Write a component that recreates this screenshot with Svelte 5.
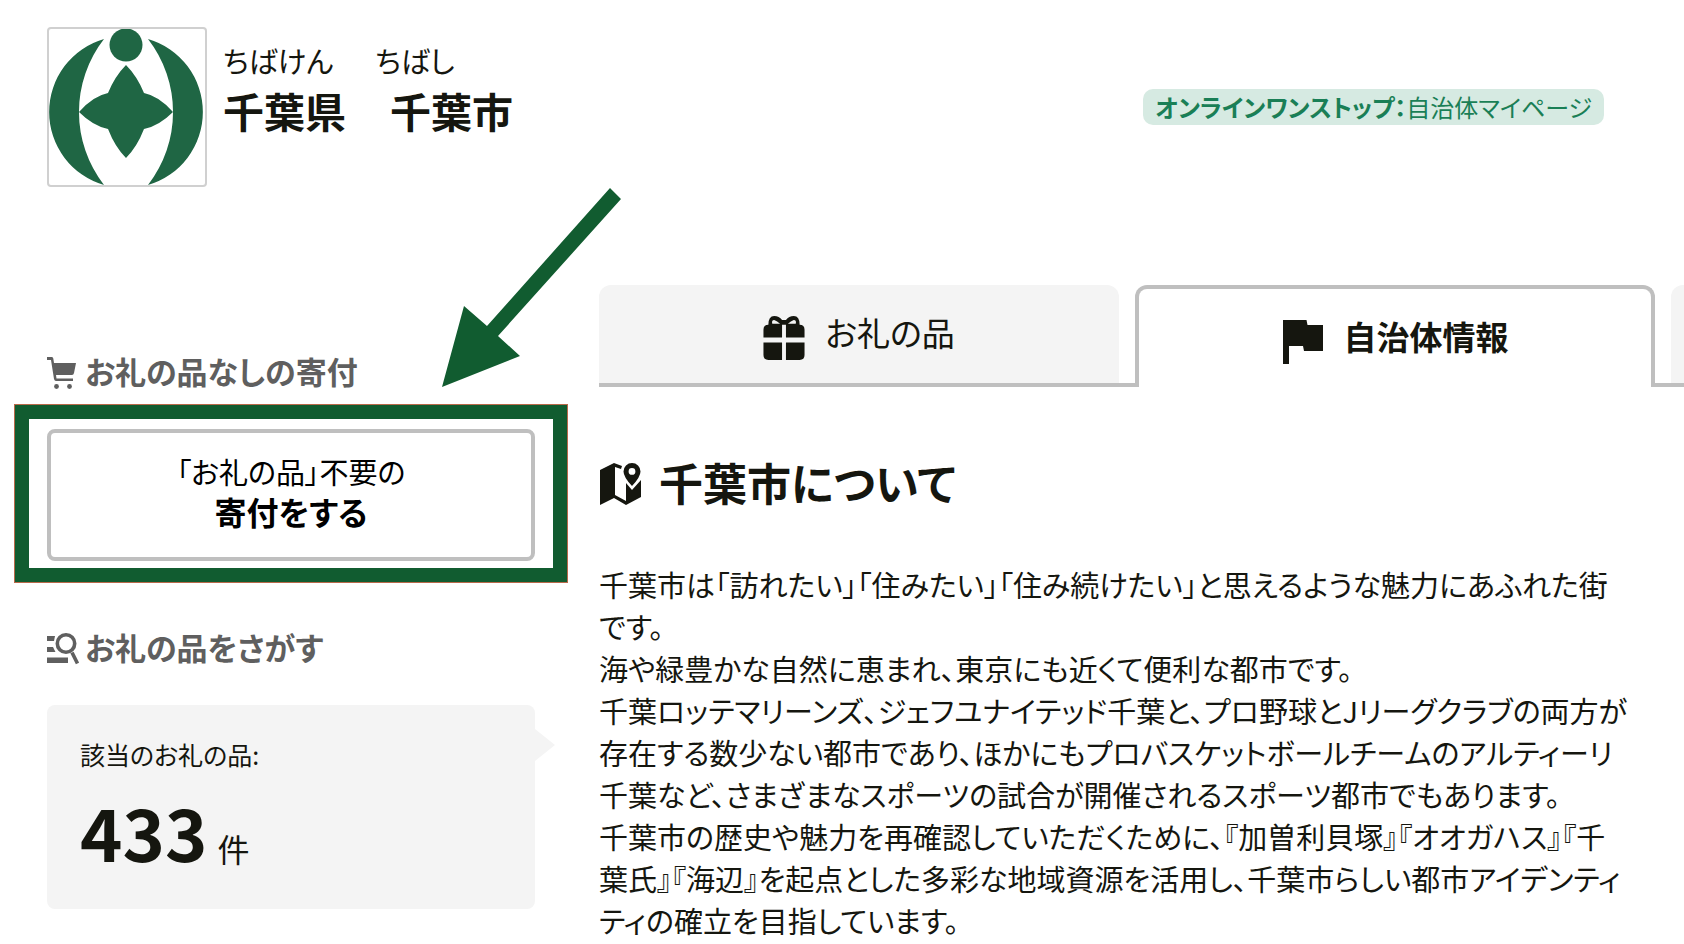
<script lang="ts">
  const kana = ["ちばけん", "ちばし"];
  const names = ["千葉県", "千葉市"];
  const count = 433;

  // each entry is one paragraph of the introduction
  const about = [
    ["千葉市は「訪れたい」「住みたい」「住み続けたい」と思えるような魅力にあふれた街", "です。"],
    ["海や緑豊かな自然に恵まれ、東京にも近くて便利な都市です。"],
    [
      "千葉ロッテマリーンズ、ジェフユナイテッド千葉と、プロ野球とJリーグクラブの両方が",
      "存在する数少ない都市であり、ほかにもプロバスケットボールチームのアルティーリ",
      "千葉など、さまざまなスポーツの試合が開催されるスポーツ都市でもあります。",
    ],
    [
      "千葉市の歴史や魅力を再確認していただくために、『加曽利貝塚』『オオガハス』『千",
      "葉氏』『海辺』を起点とした多彩な地域資源を活用し、千葉市らしい都市アイデンティ",
      "ティの確立を目指しています。",
    ],
  ];
</script>

<div class="page">
  <header>
    <svg class="emblem" viewBox="0 0 156 156" role="img" aria-label="千葉市">
      <circle cx="77" cy="16" r="16.5" />
      <path d="M55 10A76 76 0 0 0 55 156A119 119 0 0 1 55 10Z" />
      <path d="M99 10A76 76 0 0 1 99 156A119 119 0 0 0 99 10Z" />
      <path d="M77 36Q88 47 95 64Q110 67 124 83Q110 97 95 100Q88 118 77 129Q66 118 59 100Q44 97 30 83Q44 67 59 64Q66 47 77 36Z" />
    </svg>
    <div class="names">
      <p class="kana">{#each kana as k}<span>{k}</span>{/each}</p>
      <h1>{#each names as n}<span>{n}</span>{/each}</h1>
    </div>
    <a class="mypage" href="#mypage"><b>オンラインワンストップ：</b>自治体マイページ</a>
  </header>

  <div class="columns">
    <aside>
      <h2>
        <svg class="mark" viewBox="0 0 32 32" aria-hidden="true">
          <path d="M0 0H5Q6 0 6.3 1.5L7 6H29L27 16Q26.6 18 25 18H9L9.5 21.5H26V24H9Q7.5 24 7 22L4 3H0Z" />
          <circle cx="9.5" cy="29.5" r="2.4" />
          <circle cx="22.5" cy="29.5" r="2.4" />
        </svg>
        お礼の品なしの寄付
      </h2>
      <div class="focus">
        <button type="button">「お礼の品」不要の<strong>寄付をする</strong></button>
      </div>

      <h2>
        <svg class="mark" viewBox="0 0 32 32" aria-hidden="true">
          <path d="M0 3H8L7 8H0ZM0 14H6L8.5 19H0ZM0 24.5H21V30H0Z" />
          <circle class="line" cx="19" cy="10.5" r="8.7" />
          <path class="line" d="M25 19.5L30.5 30.5" />
        </svg>
        お礼の品をさがす
      </h2>
      <div class="card">
        <p>該当のお礼の品:</p>
        <p class="total"><b>{count}</b>件</p>
      </div>
    </aside>

    <main>
      <nav>
        <a class="tab" href="#gifts">
          <svg viewBox="0 0 42 45" aria-hidden="true">
            <path d="M0 14Q0 9 5 9Q5 0 11 0Q16 0 19 4H23Q26 0 31 0Q37 0 37 9Q42 9 42 14V22H23V9H19V22H0ZM0 27H19V45H5Q0 45 0 40ZM23 27H42V40Q42 45 37 45H23Z" />
            <path class="hole" d="M9 8Q8 4 11 4Q14 5 17 8ZM33 8Q34 4 31 4Q28 5 25 8Z" />
          </svg>
          お礼の品
        </a>
        <a class="tab active" href="#about" aria-current="page">
          <svg viewBox="0 0 40 44" aria-hidden="true">
            <path d="M0 0H23.5L24.5 5H40V31H21L20 26H6V44H0Z" />
          </svg>
          自治体情報
        </a>
        <a class="tab" href="#more" aria-label="その他"></a>
      </nav>

      <h2 class="title">
        <svg viewBox="0 0 42 42" aria-hidden="true">
          <path d="M1 7L15 0L23 3L22 6L16 4V32L27 38V20L33 27L42 17V34L27 42L15 35L1 42Z" />
          <path d="M33 0A8.5 8.5 0 0 1 41.5 8.5Q41.5 14 33 23Q24.5 14 24.5 8.5A8.5 8.5 0 0 1 33 0ZM33 5A3.4 3.4 0 1 0 33 11.8A3.4 3.4 0 1 0 33 5Z" fill-rule="evenodd" />
        </svg>
        千葉市について
      </h2>

      <div class="about">
        {#each about as lines}
          <p>{#each lines as line}<span>{line}</span>{/each}</p>
        {/each}
      </div>
    </main>
  </div>

  <!-- arrow pointing at the donation button -->
  <svg class="arrow" viewBox="0 0 180 200" aria-hidden="true">
    <path d="M168 0L179 11L56 148L78 168L0 199L22 118L45 138Z" />
  </svg>
</div>

<style>
  :global(body) { margin:0; background:#fff; }

  .page {
    position:relative; overflow:hidden; color:#15160f;
    font-family:"Noto Sans CJK JP", sans-serif;
    font-size:29px; line-height:42px; font-feature-settings:"palt";
  }
  p, h1, h2 { margin:0; }
  a { color:inherit; text-decoration:none; }
  svg { flex-shrink:0; fill:currentColor; }

  header { display:flex; align-items:flex-start; padding:27px 80px 0 47px; }
  .emblem { width:156px; height:156px; border:2px solid #d0d0d0; border-radius:4px; fill:#1f6644; }
  .names { flex:1; padding:12px 0 0 16px; }
  .kana { display:flex; gap:42px; }
  h1 { display:flex; gap:44px; font-size:41px; line-height:58px; }
  .mypage {
    margin-top:62px; padding:0 12px; border-radius:10px;
    background:#d6eae2; color:#1a7f56; font-size:24px; line-height:36px;
  }

  .columns { display:flex; gap:64px; padding-left:47px; margin-top:98px; }
  aside { width:488px; flex-shrink:0; padding-top:62px; }
  aside h2 { display:flex; align-items:center; gap:6px; color:#5f5f5f; font-size:31px; line-height:48px; }
  .mark { width:32px; height:32px; margin-top:4px; }
  .line { fill:none; stroke:currentColor; stroke-width:3.6; }

  .focus { margin:9px -33px 40px; padding:10px 18px 7px; border:15px solid #115c30; outline:1px solid #b9694a; outline-offset:-1px; }
  button {
    display:block; width:100%; padding:18px 0 26px; border:4px solid #bfbfbf; border-radius:8px;
    background:#fff; color:#000; font:inherit; line-height:40px; font-feature-settings:inherit; cursor:pointer;
  }
  strong { display:block; font-size:32px; }

  .card { position:relative; margin-top:34px; padding:28px 33px 22px; border-radius:8px; background:#f4f4f4; font-size:25px; }
  .card::after {
    content:""; position:absolute; left:100%; top:24px;
    border:solid transparent; border-width:16px 0 16px 20px; border-left-color:#f4f4f4;
  }
  .total { display:flex; align-items:baseline; gap:10px; font-size:32px; line-height:40px; }
  .total b { font-size:72px; line-height:112px; }

  main { flex:1; min-width:0; }
  nav { display:flex; align-items:flex-start; gap:16px; height:102px; overflow:hidden; box-shadow:inset 0 -4px #bfbfbf; }
  .tab {
    box-sizing:border-box; flex:0 0 520px; height:98px; display:flex; align-items:center; justify-content:center; gap:20px;
    padding-bottom:4px; border-radius:12px 12px 0 0; background:#f4f4f4; font-size:33px;
  }
  .tab svg { width:42px; height:44px; margin-top:12px; }
  .active { height:102px; border:4px solid #bfbfbf; border-bottom:0; background:#fff; font-weight:bold; }
  .hole { fill:#f4f4f4; }

  .title { display:flex; align-items:center; gap:18px; margin-top:63px; font-size:44px; line-height:64px; }
  .title svg { width:42px; height:42px; margin-top:4px; }
  .about { margin-top:49px; padding-right:40px; }
  .about span { display:block; }

  .arrow { position:absolute; left:442px; top:188px; width:180px; height:200px; color:#115c30; }
</style>
